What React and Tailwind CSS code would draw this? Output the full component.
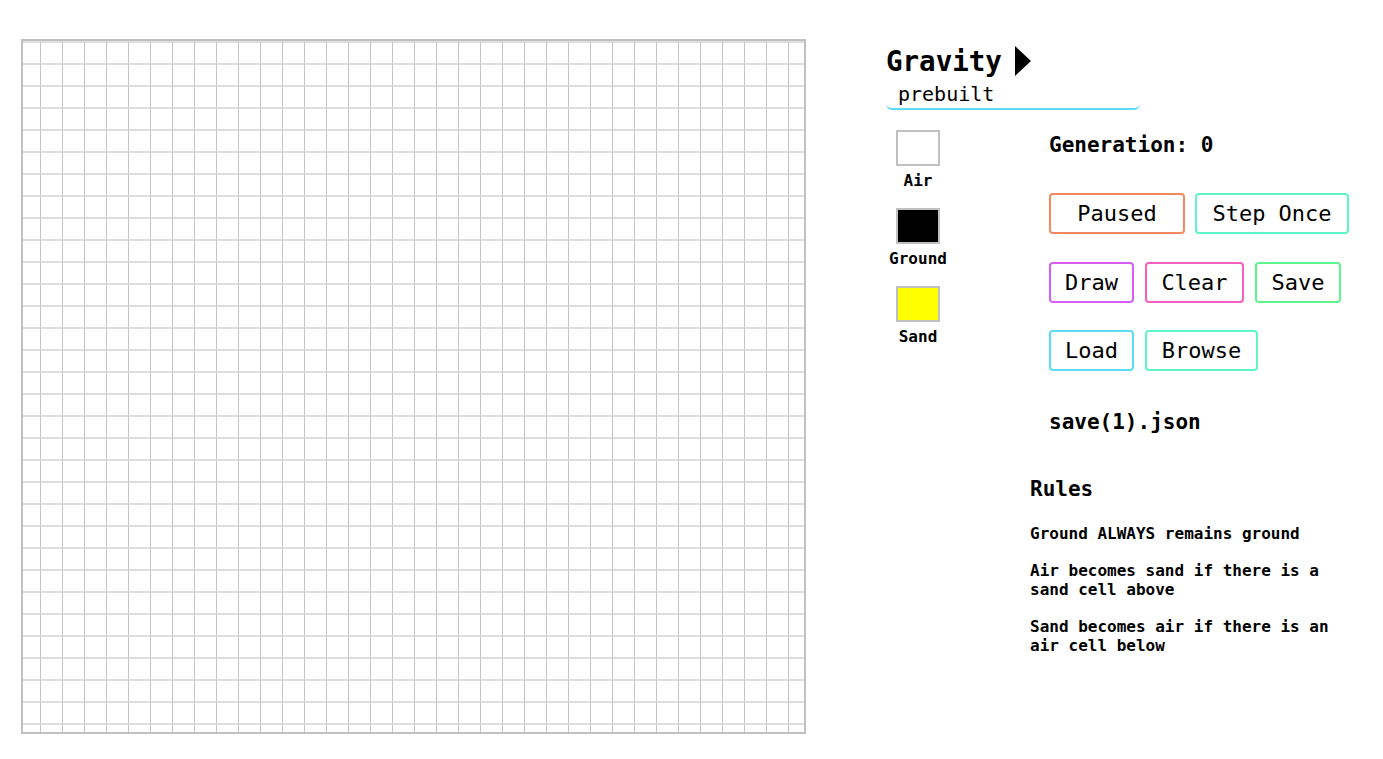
import React from "react";

const ROWS = 32;
const COLS = 36;

const palette = [
  { name: "Air", swatch: "bg-white" },
  { name: "Ground", swatch: "bg-black" },
  { name: "Sand", swatch: "bg-[#ffff00]" },
];

const rules = [
  "Ground ALWAYS remains ground",
  "Air becomes sand if there is a sand cell above",
  "Sand becomes air if there is an air cell below",
];

function Btn({ children, color, className = "" }) {
  return (
    <button
      className={`h-[41px] rounded-[4px] border-2 bg-white text-[22px] leading-none text-black ${color} ${className}`}
    >
      {children}
    </button>
  );
}

function Board() {
  return (
    <div className="h-[695px] w-[785px] shrink-0 overflow-hidden border-2 border-[#c0c0c0] bg-white">
      <div className="-ml-[4px] flex flex-col">
        {Array.from({ length: ROWS }).map((_, r) => (
          <div key={r} className="flex">
            {Array.from({ length: COLS }).map((_, c) => (
              <div
                key={c}
                className="h-[22px] w-[22px] shrink-0 border-r border-t-2 border-r-[#c4c4c4] border-t-[#dedede]"
              />
            ))}
          </div>
        ))}
      </div>
    </div>
  );
}

export default function App() {
  return (
    <div className="flex min-h-screen bg-white pl-[21px] pt-[39px] font-['DejaVu_Sans_Mono',monospace] text-black">
      <Board />

      <div className="ml-[80px] flex flex-col">
        <div className="mt-[5px] flex items-center">
          <h1 className="text-[27.5px] font-bold leading-[34px]">Gravity</h1>
          <svg width="16" height="30" viewBox="0 0 16 30" className="ml-[13px]">
            <polygon points="0,0 16,15 0,30" fill="#000" />
          </svg>
        </div>
        <div className="mt-[4px] w-[254px] rounded-b-[6px] border-b-2 border-[#5ddcf5] pb-[2px] pl-[12px] text-[20px] leading-[24px]">
          prebuilt
        </div>

        <div className="mt-[20px] flex">
          <div className="flex w-[64px] flex-col items-center gap-[15px]">
            {palette.map((p) => (
              <div key={p.name} className="flex flex-col items-center">
                <div className={`h-[36px] w-[44px] border-2 border-[#c0c0c0] ${p.swatch}`} />
                <div className="mt-[3px] text-[16px] font-bold leading-[24px]">{p.name}</div>
              </div>
            ))}
          </div>

          <div className="ml-[80px] flex w-[330px] flex-col">
            <div className="pl-[19px]">
              <div className="pt-[1px] text-[21px] font-bold leading-[28px]">Generation: 0</div>

              <div className="mt-[34px] flex gap-[10px]">
                <Btn color="border-[#f4895f]" className="w-[136px]">Paused</Btn>
                <Btn color="border-[#5ef5c8]" className="w-[154px]">Step Once</Btn>
              </div>
              <div className="mt-[28px] flex gap-[11px]">
                <Btn color="border-[#d65ef5]" className="w-[85px]">Draw</Btn>
                <Btn color="border-[#f55fbf]" className="w-[99px]">Clear</Btn>
                <Btn color="border-[#5ef58c]" className="w-[86px]">Save</Btn>
              </div>
              <div className="mt-[27px] flex gap-[11px]">
                <Btn color="border-[#5bdcf7]" className="w-[85px]">Load</Btn>
                <Btn color="border-[#5ef5c8]" className="w-[113px]">Browse</Btn>
              </div>

              <div className="mt-[37px] text-[21px] font-bold leading-[28px]">save(1).json</div>
            </div>

            <h3 className="mt-[39px] text-[21px] font-bold leading-[28px]">Rules</h3>
            <div className="mt-[21px] flex flex-col gap-[18px]">
              {rules.map((r) => (
                <p key={r} className="text-[16px] font-bold leading-[19px]">
                  {r}
                </p>
              ))}
            </div>
          </div>
        </div>
      </div>
    </div>
  );
}
